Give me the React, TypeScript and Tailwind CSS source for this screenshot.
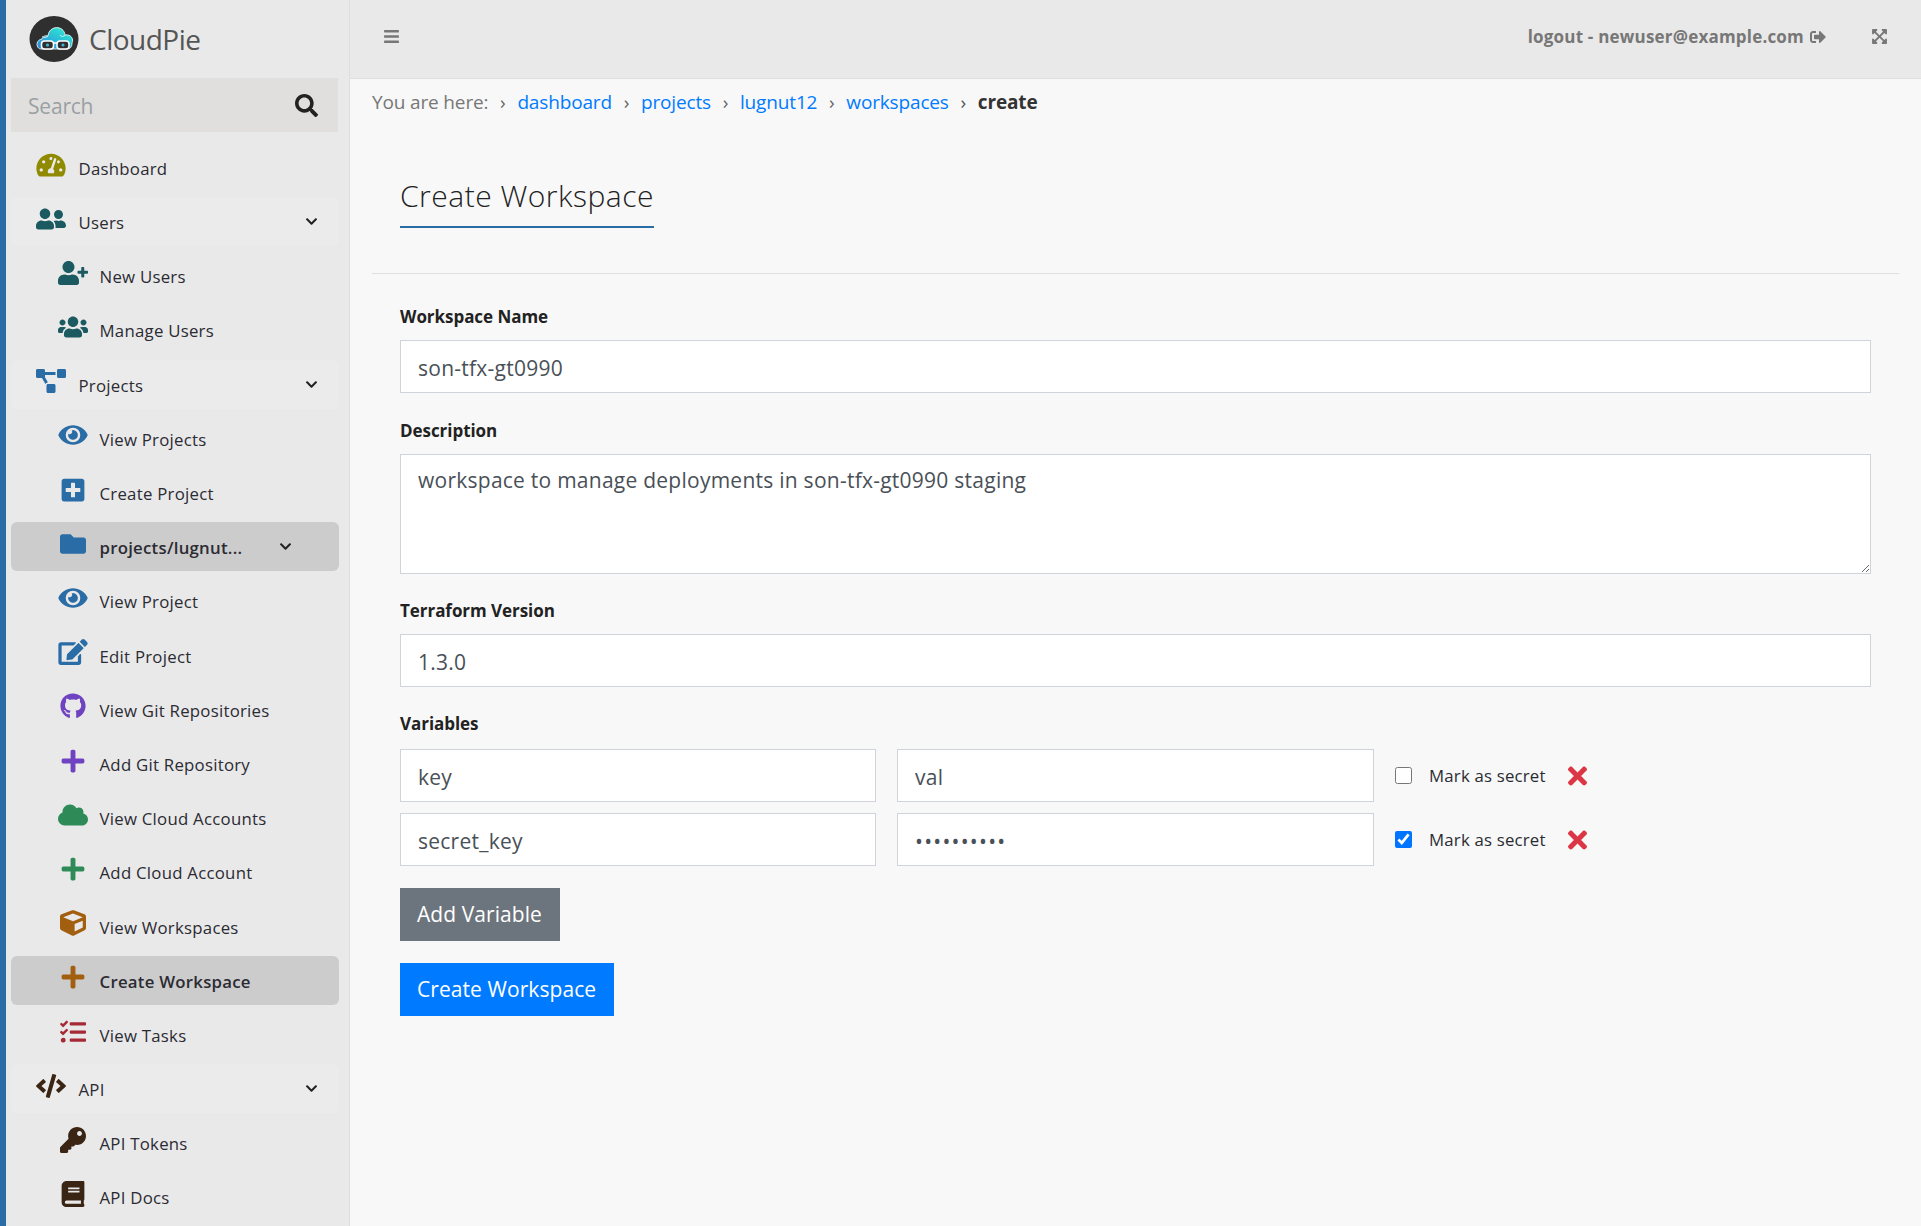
import React from 'react';
import {
  FaBars, FaBook, FaChevronDown, FaCloud, FaCode, FaCube, FaEdit, FaExpandArrowsAlt, FaEye, FaFolder,
  FaGithub, FaKey, FaPlus, FaPlusSquare, FaProjectDiagram, FaSearch, FaSignOutAlt, FaTachometerAlt,
  FaTasks, FaTimes, FaUserFriends, FaUserPlus, FaUsers,
} from 'react-icons/fa';

const font = "font-['Open_Sans','Noto_Sans',sans-serif]";

const Logo = () => (
  <svg viewBox="0 0 50 46" className="w-[50px] h-[46px] shrink-0">
    <defs>
      <linearGradient id="cloud" x1="0.9" y1="0" x2="0.1" y2="0.9">
        <stop offset="0.1" stopColor="#2fe6d0" />
        <stop offset="1" stopColor="#2a8fe0" />
      </linearGradient>
    </defs>
    <ellipse cx="25" cy="23" rx="24.5" ry="23" fill="#2f2f2f" />
    <path
      d="M12 33c-5 0-6-9 1-10 1-3 4-4 6-3 1-11 16-11 17-1 6-1 9 4 7 8 0 4-2 6-5 6z"
      fill="url(#cloud)"
      stroke="#fff"
      strokeWidth="0.8"
    />
    <path d="M13 20.5l3 1 3-1M31 19.5l2.5 1 2.5-1" fill="none" stroke="#fff" strokeWidth="0.7" />
    <rect x="12.5" y="25" width="12" height="8" rx="3" fill="#2f2f2f" stroke="#fff" strokeWidth="1.5" />
    <rect x="28" y="25" width="12" height="8" rx="3" fill="#2f2f2f" stroke="#fff" strokeWidth="1.5" />
    <path d="M24.5 27h3.5" stroke="#fff" strokeWidth="1.5" />
    <circle cx="18.5" cy="29" r="1.6" fill="#3fb4d8" />
    <circle cx="34" cy="29" r="1.6" fill="#3fb4d8" />
  </svg>
);

type NavItem = {
  label: string;
  icon: React.ComponentType<{ className?: string }>;
  color: string;
  level?: 'group' | 'child' | 'top';
  active?: boolean;
  caret?: boolean;
};

const navItems: NavItem[] = [
  { label: 'Dashboard', icon: FaTachometerAlt, color: 'text-[#8f8a00]', level: 'top' },
  { label: 'Users', icon: FaUserFriends, color: 'text-[#1a5a60]', level: 'group', caret: true },
  { label: 'New Users', icon: FaUserPlus, color: 'text-[#1a5a60]' },
  { label: 'Manage Users', icon: FaUsers, color: 'text-[#1a5a60]' },
  { label: 'Projects', icon: FaProjectDiagram, color: 'text-[#2a6ca5]', level: 'group', caret: true },
  { label: 'View Projects', icon: FaEye, color: 'text-[#2a6ca5]' },
  { label: 'Create Project', icon: FaPlusSquare, color: 'text-[#2a6ca5]' },
  { label: 'projects/lugnut...', icon: FaFolder, color: 'text-[#2a6ca5]', active: true, caret: true },
  { label: 'View Project', icon: FaEye, color: 'text-[#2a6ca5]' },
  { label: 'Edit Project', icon: FaEdit, color: 'text-[#2a6ca5]' },
  { label: 'View Git Repositories', icon: FaGithub, color: 'text-[#6f42c1]' },
  { label: 'Add Git Repository', icon: FaPlus, color: 'text-[#6f42c1]' },
  { label: 'View Cloud Accounts', icon: FaCloud, color: 'text-[#2e8b57]' },
  { label: 'Add Cloud Account', icon: FaPlus, color: 'text-[#2e8b57]' },
  { label: 'View Workspaces', icon: FaCube, color: 'text-[#a35f10]' },
  { label: 'Create Workspace', icon: FaPlus, color: 'text-[#a35f10]', active: true },
  { label: 'View Tasks', icon: FaTasks, color: 'text-[#a52a35]' },
  { label: 'API', icon: FaCode, color: 'text-[#3a2414]', level: 'group', caret: true },
  { label: 'API Tokens', icon: FaKey, color: 'text-[#3a2414]' },
  { label: 'API Docs', icon: FaBook, color: 'text-[#3a2414]' },
];

const NavRow = ({ item }: { item: NavItem }) => {
  const Icon = item.icon;
  const isTop = item.level === 'top' || item.level === 'group';
  return (
    <div
      className={`flex items-center h-[49px] rounded-md shrink-0 ${isTop ? 'pl-[24px]' : 'pl-[45.5px]'} ${
        item.active ? 'bg-[#cccccc] font-semibold' : item.level === 'group' ? 'bg-[#ebebeb]' : ''
      }`}
    >
      <span className="w-[32px] h-[28px] flex items-center justify-center -translate-y-[3px] shrink-0">
        <Icon className={`w-[30px] h-[26px] ${item.color}`} />
      </span>
      <span
        className={`text-[16.8px] tracking-[0.25px] text-[#2b2b33] whitespace-nowrap translate-y-[0.5px] ${
          isTop ? 'ml-[11.5px]' : 'ml-[11px]'
        }`}
      >
        {item.label}
      </span>
      {item.caret && (
        <FaChevronDown
          className={`w-[13px] h-[13px] text-[#222] ${item.active ? 'ml-[37px]' : 'ml-auto mr-[21px]'}`}
        />
      )}
    </div>
  );
};

const Sidebar = () => (
  <aside className="w-[350px] shrink-0 bg-[#e9e9e9] border-l-[6px] border-l-[#2a6ca5] border-r border-r-[#dedede] flex flex-col overflow-hidden">
    <div className="h-[78px] flex items-center pl-[23px] gap-[10px]">
      <Logo />
      <span className="text-[28px] tracking-[-0.5px] text-[#555]">CloudPie</span>
    </div>
    <div className="mx-[5px] w-[327px] h-[54px] bg-[#e0dfdd] flex items-center pl-[17px] pr-[20px] justify-between">
      <span className="text-[21px] tracking-[-0.2px] text-[#9a9fa4] translate-y-[2px]">Search</span>
      <FaSearch className="w-[23px] h-[23px] text-[#222]" />
    </div>
    <nav className="flex flex-col gap-[5.2px] mt-[11px] px-[5px] w-[338px]">
      {navItems.map((item) => (
        <NavRow key={item.label} item={item} />
      ))}
    </nav>
  </aside>
);

const Topbar = () => (
  <header className="h-[79px] shrink-0 bg-[#e9e9e9] border-b border-b-[#dedede] flex items-center pb-[5px] pl-[33px] pr-[33px] text-[#777]">
    <FaBars className="w-[17px] h-[17px]" />
    <span className="ml-auto text-[17px] tracking-[0.2px] font-bold">logout - newuser@example.com</span>
    <FaSignOutAlt className="ml-[5px] w-[18px] h-[16px]" />
    <FaExpandArrowsAlt className="ml-[44px] w-[17px] h-[17px]" />
  </header>
);

const Crumbs = () => (
  <div className="h-[49px] flex items-center pl-[22px] text-[19px] tracking-[-0.15px] -translate-y-[1px]">
    <span className="text-[#777]">You are here:</span>
    {['dashboard', 'projects', 'lugnut12', 'workspaces'].map((c) => (
      <React.Fragment key={c}>
        <span className="w-[29px] text-center text-[#666]">›</span>
        <span className="text-[#007bff]">{c}</span>
      </React.Fragment>
    ))}
    <span className="w-[29px] text-center text-[#555]">›</span>
    <span className="font-bold text-[#333]">create</span>
  </div>
);

const fieldClass =
  'block w-full h-[53px] px-[17px] pt-[2px] bg-white border border-[#ced4da] text-[21px] tracking-[0.25px] text-[#495057] outline-none';

const labelClass = 'block h-[24px] text-[17px] tracking-[-0.05px] font-bold text-[#222]';

const VarRow = ({ k, v, secret }: { k: string; v: string; secret?: boolean }) => (
  <div className="flex items-center h-[53px]">
    <input className={`${fieldClass} !w-[476px]`} defaultValue={k} />
    <input
      className={`${fieldClass} !w-[477px] ml-[21px] ${secret ? '!tracking-[1.25px]' : ''}`}
      type={secret ? 'password' : 'text'}
      defaultValue={v}
    />
    <input
      type="checkbox"
      defaultChecked={secret}
      className="ml-[21px] w-[17px] h-[17px] accent-[#0075ff]"
    />
    <span className="ml-[17px] text-[16.8px] tracking-[0.2px] text-[#2b2b33]">Mark as secret</span>
    <FaTimes className="ml-[22px] w-[19px] h-[28px] text-[#dc3545]" />
  </div>
);

export default function App() {
  return (
    <div className={`flex w-[1921px] h-[1226px] overflow-hidden bg-[#f8f8f8] ${font}`}>
      <Sidebar />
      <div className="flex-1 flex flex-col min-w-0">
        <Topbar />
        <Crumbs />
        <main className="px-[22px]">
          <div className="px-[28px] pt-[47px] pb-[45px] border-b border-b-[#dfdfdf]">
            <h1 className="inline-block pb-[10px] text-[30px] leading-[41px] tracking-[0.5px] font-light text-[#222] border-b-2 border-b-[#2a6ca5]">
              Create Workspace
            </h1>
          </div>
          <form className="px-[28px] pt-[30px]">
            <div className="mb-[25px]">
              <label className={`${labelClass} mb-[12px]`}>Workspace Name</label>
              <input className={fieldClass} defaultValue="son-tfx-gt0990" />
            </div>
            <div className="mb-[24px]">
              <label className={`${labelClass} mb-[12px]`}>Description</label>
              <textarea
                className={`${fieldClass} !h-[120px] pt-[10px]`}
                defaultValue="workspace to manage deployments in son-tfx-gt0990 staging"
              />
            </div>
            <div className="mb-[24px]">
              <label className={`${labelClass} mb-[12px]`}>Terraform Version</label>
              <input className={fieldClass} defaultValue="1.3.0" />
            </div>
            <label className={`${labelClass} mb-[14px]`}>Variables</label>
            <div className="flex flex-col gap-[11px]">
              <VarRow k="key" v="val" />
              <VarRow k="secret_key" v="1234567890" secret />
            </div>
            <button
              type="button"
              className="block mt-[22px] h-[53px] pl-[17px] pr-[18px] bg-[#6c757d] text-white text-[21px] tracking-[0.07px]"
            >
              Add Variable
            </button>
            <button
              type="button"
              className="block mt-[22px] h-[53px] pl-[17px] pr-[18px] bg-[#007bff] text-white text-[21px] tracking-[0.07px]"
            >
              Create Workspace
            </button>
          </form>
        </main>
      </div>
    </div>
  );
}
